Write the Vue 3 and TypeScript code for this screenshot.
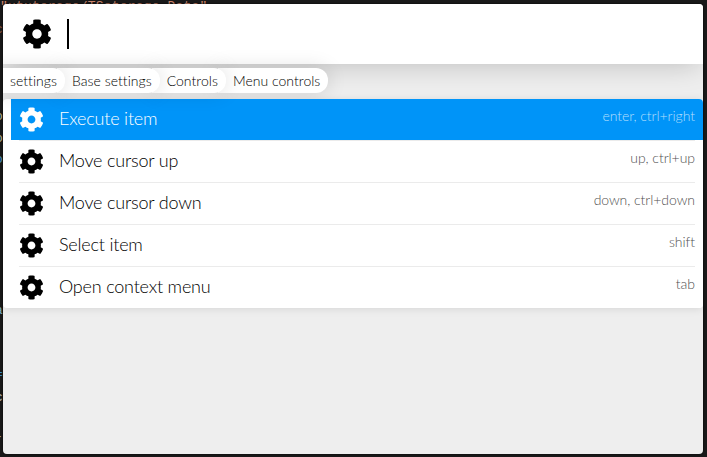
<script setup lang="ts">
import { ref } from 'vue'

interface MenuItem {
  name: string
  keys: string
}

const gear =
  'M487.4 315.7l-42.6-24.6c4.3-23.2 4.3-47 0-70.2l42.6-24.6c4.9-2.8 7.1-8.6 5.5-14-11.1-35.6-30-67.8-54.7-94.6-3.8-4.1-10-5.1-14.8-2.3L380.8 110c-17.9-15.4-38.5-27.3-60.8-35.1V25.8c0-5.6-3.9-10.5-9.4-11.7-36.7-8.2-74.3-7.8-109.2 0-5.5 1.2-9.4 6.1-9.4 11.7V75c-22.2 7.9-42.8 19.8-60.8 35.1L88.7 85.5c-4.9-2.8-11-1.9-14.8 2.3-24.7 26.7-43.6 58.9-54.7 94.6-1.7 5.4.6 11.2 5.5 14L67.3 221c-4.3 23.2-4.3 47 0 70.2l-42.6 24.6c-4.9 2.8-7.1 8.6-5.5 14 11.1 35.6 30 67.8 54.7 94.6 3.8 4.1 10 5.1 14.8 2.3l42.6-24.6c17.9 15.4 38.5 27.3 60.8 35.1v49.2c0 5.6 3.9 10.5 9.4 11.7 36.7 8.2 74.3 7.8 109.2 0 5.5-1.2 9.4-6.1 9.4-11.7v-49.2c22.2-7.9 42.8-19.8 60.8-35.1l42.6 24.6c4.9 2.8 11 1.9 14.8-2.3 24.7-26.7 43.6-58.9 54.7-94.6 1.5-5.5-.7-11.3-5.6-14.1zM256 336c-44.1 0-80-35.9-80-80s35.9-80 80-80 80 35.9 80 80-35.9 80-80 80z'

const crumbs: string[] = ['settings', 'Base settings', 'Controls', 'Menu controls']
const selected = ref(0)
const items: MenuItem[] = [
  { name: 'Execute item', keys: 'enter, ctrl+right' },
  { name: 'Move cursor up', keys: 'up, ctrl+up' },
  { name: 'Move cursor down', keys: 'down, ctrl+down' },
  { name: 'Select item', keys: 'shift' },
  { name: 'Open context menu', keys: 'tab' },
]
</script>

<template>
  <div class="desktop">
    <div class="behind top">"ututorage/TSstorage Data"</div>
    <span class="behind edge e1">c</span>
    <span class="behind edge e2">o</span>
    <span class="behind edge e3">o</span>
    <span class="behind edge e4">o</span>
    <span class="behind edge e5">a</span>
    <span class="behind edge e6">=</span>
    <span class="behind edge e7">c</span>
    <span class="behind edge e8">-</span>
    <main class="window">
      <header class="search">
        <svg class="search-icon" viewBox="0 0 512 512"><path :d="gear" /></svg>
        <span class="caret"></span>
      </header>
      <nav class="crumbs">
        <span v-for="(c, i) in crumbs" :key="c" class="crumb" :style="{ zIndex: crumbs.length - i }">{{ c }}</span>
      </nav>
      <ul class="list">
        <li v-for="(item, i) in items" :key="item.name" class="row" :class="{ selected: i === selected }" @mouseenter="selected = i">
          <div class="inner">
            <svg class="row-icon" viewBox="0 0 512 512"><path :d="gear" /></svg>
            <span class="name">{{ item.name }}</span>
            <span class="keys">{{ item.keys }}</span>
          </div>
        </li>
      </ul>
    </main>
  </div>
</template>

<style>
body {
  background: #191919;
  overflow: hidden;
}
</style>

<style scoped>
.desktop {
  position: relative;
  box-sizing: border-box;
  width: 707px;
  height: 457px;
  padding: 4px 4px 3px 3px;
  background: #191919;
  overflow: hidden;
  font-family: Lato, "Liberation Sans", sans-serif;
  font-weight: 300;
  font-variant-ligatures: none;
}
.behind {
  position: absolute;
  font: 13px/16px "Liberation Mono", monospace;
  white-space: pre;
}
.top {
  left: 0;
  top: -1px;
  letter-spacing: 0.18px;
  color: #c9836a;
}
.edge {
  left: -5px;
  color: #b4b08f;
}
.e1 { top: 22px; color: #87543f; }
.e2 { top: 109px; }
.e3 { top: 131px; }
.e4 { top: 152px; color: #4c94bd; }
.e5 { top: 303px; color: #79a9bd; }
.e6 { top: 367px; color: #398ac4; }
.e7 { top: 390px; color: #b5b5b5; }
.e8 { top: 429px; color: #b5b5b5; }
.window {
  position: relative;
  height: 450px;
  background: #eeeeee;
  border-radius: 4px;
  overflow: hidden;
  box-shadow: 0 0 2px #000;
}
.search {
  position: relative;
  display: flex;
  align-items: center;
  box-sizing: border-box;
  height: 60px;
  padding-left: 19px;
  background: #fff;
  box-shadow: 0 4px 28px -4px rgba(0, 0, 0, 0.22);
}
.search-icon {
  width: 30px;
  height: 30px;
}
.caret {
  width: 2px;
  height: 30px;
  margin-left: 15px;
  background: #000;
}
.crumbs {
  position: relative;
  display: flex;
  height: 25px;
  margin-top: 4px;
}
.crumb {
  position: relative;
  height: 25px;
  padding: 0 8px 0 15px;
  margin-left: -8px;
  border-radius: 0 12px 12px 0;
  background: #fff;
  box-shadow: 0 0 20px rgba(0, 0, 0, 0.13);
  color: #000;
  font-size: 14px;
  letter-spacing: 0.03px;
  line-height: 26px;
  white-space: nowrap;
}
.list {
  position: relative;
  z-index: 1;
  margin: 6px 0 0;
  padding: 0;
  list-style: none;
  border-radius: 4px;
  overflow: hidden;
  background: #fff;
  box-shadow: 0 1px 8px rgba(0, 0, 0, 0.1);
}
.row {
  height: 42px;
  margin-left: 8px;
  padding: 0 8px;
  background: #fff;
  color: #000;
}
.row:last-child {
  height: 41px;
}
.inner {
  display: flex;
  box-sizing: border-box;
  height: 42px;
  border-bottom: 1px solid #ebebeb;
}
.row:last-child .inner {
  height: 41px;
  border-bottom: 0;
}
.row.selected {
  background: linear-gradient(#0094f8 41px, #fff 41px);
  color: #fff;
}
.row-icon {
  width: 25px;
  height: 25px;
  margin-top: 8px;
}
path {
  fill: currentColor;
}
.name {
  flex: 1;
  margin-left: 15px;
  font-size: 18px;
  letter-spacing: -0.2px;
  line-height: 38px;
}
.keys {
  color: #505050;
  font-size: 14px;
  letter-spacing: -0.05px;
  line-height: 34px;
}
.selected .keys {
  color: #b4dffd;
}
</style>
